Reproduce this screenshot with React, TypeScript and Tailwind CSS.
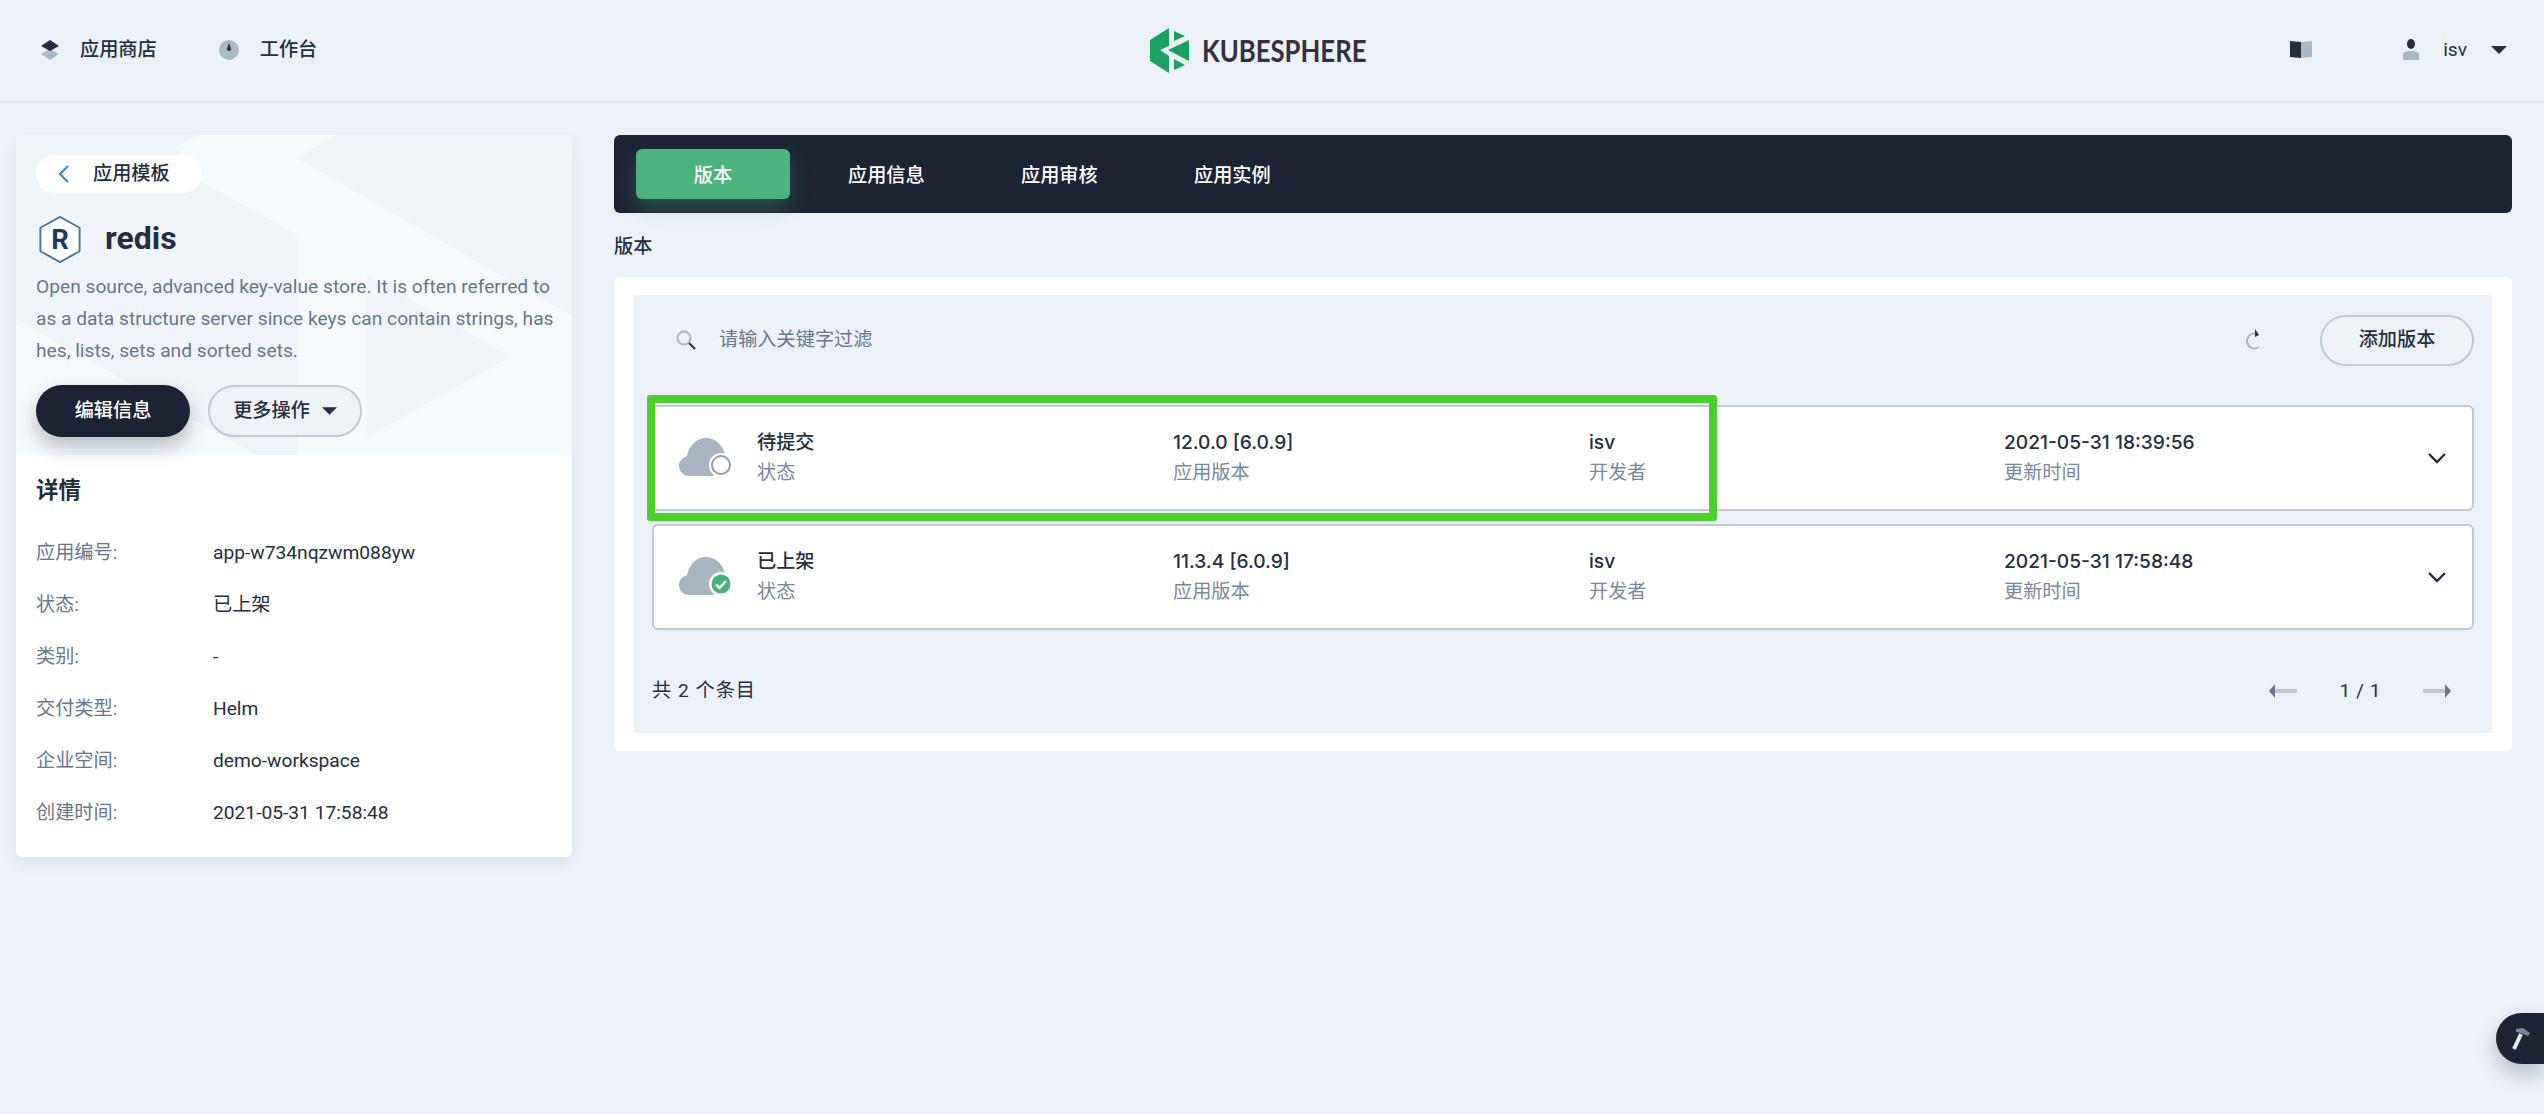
import React from 'react';

const details = [
  ['应用编号:', 'app-w734nqzwm088yw'],
  ['状态:', '已上架'],
  ['类别:', '-'],
  ['交付类型:', 'Helm'],
  ['企业空间:', 'demo-workspace'],
  ['创建时间:', '2021-05-31 17:58:48'],
];

const versions = [
  { status: '待提交', version: '12.0.0 [6.0.9]', author: 'isv', time: '2021-05-31 18:39:56', done: false },
  { status: '已上架', version: '11.3.4 [6.0.9]', author: 'isv', time: '2021-05-31 17:58:48', done: true },
];

function Caret({ className }: { className: string }) {
  return (
    <svg viewBox="0 0 16 8" className={className}>
      <path d="M0 0h16l-8 8z" fill="#242e42" />
    </svg>
  );
}

function Logo() {
  return (
    <svg viewBox="0 0 40 45" className="w-[40px] h-[45px] shrink-0">
      <path d="M0 12 19 0v18l-9 4 9 6v17L0 33z" fill="#1aa05f" />
      <path d="M24 3l11 5-11 5zM39 12v21L18 22zM24 31l11 6-11 5z" fill="#1aa05f" />
    </svg>
  );
}

function CloudIcon({ done }: { done: boolean }) {
  return (
    <svg viewBox="0 0 54 40" className="w-[54px] h-[40px] shrink-0">
      <path
        d="M10 38a10 10 0 0 1-2-19.800C10 7 18 0 27 0c10 0 18 8 19 18v8L34 38z"
        fill="#a7b5c3"
      />
      <circle cx="42" cy="27" r="12" fill="#fff" />
      {done ? (
        <>
          <circle cx="42" cy="27" r="9.500" fill="#45b27a" />
          <path d="M37 27.500l3.500 3.500 6.500-7" fill="none" stroke="#fff" strokeWidth="2.500" />
        </>
      ) : (
        <circle cx="42" cy="27" r="9" fill="#fff" stroke="#8f9dad" strokeWidth="2" />
      )}
    </svg>
  );
}

function Banner() {
  return (
    <svg viewBox="0 0 556 320" preserveAspectRatio="none" className="absolute left-0 top-0 w-[556px] h-[320px]">
      <path
        d="M183 0h138l-40 23 275 158v139H281V100L186 47l-26-35z"
        fill="#f7fafc"
      />
      <path d="M0 184l240 136H0z" fill="#f7fafc" />
      <path d="M351 140l144 82-144 80z" fill="#f0f4f9" />
    </svg>
  );
}

export default function App() {
  return (
    <div className="min-h-screen relative overflow-hidden bg-[#ecf1f8] text-[#242e42] text-[19.200px] font-['Roboto','Noto_Sans_CJK_SC',sans-serif]">
      <header className="h-[103px] border-b-2 border-[#dfe4ec] flex items-center pb-[1px]">
        <div className="w-[1150px] flex items-center pl-[40px]">
          <svg viewBox="0 0 20 20" className="w-[20px] h-[20px] mr-[20px]">
            <path d="M10 9l9 5-9 6-9-6z" fill="#abb8c6" />
            <path d="M10 0l9 6-9 5-9-5z" fill="#242e42" />
          </svg>
          <span className="font-medium">应用商店</span>
          <svg viewBox="0 0 20 20" className="w-[20px] h-[20px] ml-[62px] mr-[21px]">
            <circle cx="10" cy="10" r="10" fill="#abb8c6" />
            <path d="M10 3l2 6a2 2 0 1 1-4 0z" fill="#242e42" />
          </svg>
          <span className="font-medium">工作台</span>
        </div>
        <Logo />
        <span className="ml-[12px] text-[31px] leading-none text-[#352f3f] font-['Lato',sans-serif] font-bold origin-left scale-x-[0.83]">
          KUBESPHERE
        </span>
        <div className="ml-auto flex items-center pr-[37px]">
          <svg viewBox="0 0 22 17" className="w-[22px] h-[17px]">
            <path d="M0 0l11 1v16L0 16z" fill="#242e42" />
            <path d="M11 1l11-1v16l-11 1z" fill="#abb8c6" />
          </svg>
          <svg viewBox="0 0 16 21" className="w-[16px] h-[21px] ml-[91px]">
            <ellipse cx="8" cy="5" rx="4" ry="5" fill="#242e42" />
            <path d="M0 21v-5c0-3 3-4 8-4s8 1 8 4v5z" fill="#abb8c6" />
          </svg>
          <span className="ml-[24px]">isv</span>
          <Caret className="w-[16px] h-[8px] ml-[24px]" />
        </div>
      </header>

      <main className="flex pt-[32px] pl-[16px]">
        <aside className="w-[556px] h-[722px] shrink-0 rounded-[6px] bg-white shadow-[0_6px_16px_rgba(36,46,66,0.07)] overflow-hidden">
          <section className="relative h-[320px] bg-[#f0f4f9] px-[20px] pt-[20px]">
            <Banner />
            <div className="relative">
              <a className="w-[166px] h-[38px] rounded-full bg-white flex items-center pl-[22px] font-medium">
                <svg viewBox="0 0 12 20" className="w-[12px] h-[20px] mr-[23px]">
                  <path d="M10 2l-8 8 8 8" fill="none" stroke="#2b8fc9" strokeWidth="2.200" />
                </svg>
                应用模板
              </a>
              <div className="flex items-center mt-[23px] h-[47px]">
                <svg viewBox="0 0 44 48" className="w-[44px] h-[47px] ml-[2px] shrink-0">
                  <path
                    d="M22 1l20 11v24L22 47 2 36V12z"
                    fill="#fff"
                    stroke="#4d7a9b"
                    strokeWidth="2"
                    strokeLinejoin="round"
                  />
                  <text x="22" y="34" textAnchor="middle" fontSize="28" fontWeight="700" fill="#1d3b5c">
                    R
                  </text>
                </svg>
                <h1 className="ml-[23px] text-[32px] leading-none font-bold relative -top-[2px]">redis</h1>
              </div>
              <p className="mt-[8px] w-[524px] leading-[32px] text-[#67768c] break-all">
                Open source, advanced key-value store. It is often referred to as a data structure server since keys can contain strings, has hes, lists, sets and sorted sets.
              </p>
              <div className="flex mt-[18px] gap-[18px]">
                <button type="button" className="w-[154px] h-[52px] rounded-full bg-[#1c2334] text-white font-medium shadow-[0_10px_20px_rgba(36,46,66,0.3)]">
                  编辑信息
                </button>
                <button type="button" className="w-[154px] h-[52px] rounded-full bg-[#eef2f7] border-2 border-[#c1c9d4] font-medium flex items-center justify-center gap-[12px]">
                  更多操作
                  <Caret className="w-[15px] h-[8px]" />
                </button>
              </div>
            </div>
          </section>
          <section className="px-[20px] pt-[17px]">
            <h2 className="text-[22.400px] leading-[36px] font-semibold mb-[19px]">详情</h2>
            {details.map(([label, value]) => (
              <div key={label} className="flex h-[52px] items-center">
                <span className="w-[177px] shrink-0 text-[#67768c]">{label}</span>
                <span>{value}</span>
              </div>
            ))}
          </section>
        </aside>

        <div className="ml-[42px] w-[1898px] shrink-0">
          <nav className="h-[78px] rounded-[6px] bg-[#1c2334] flex items-center pl-[22px] text-white font-medium">
            <span className="w-[154px] h-[50px] rounded-[6px] bg-[#4bb37b] flex items-center justify-center pt-[4px] shadow-[0_10px_20px_rgba(75,179,123,0.3)]">
              版本
            </span>
            <span className="ml-[58px] w-[173px] pt-[4px]">应用信息</span>
            <span className="w-[173px] pt-[4px]">应用审核</span>
            <span className="pt-[4px]">应用实例</span>
          </nav>
          <h2 className="mt-[20px] leading-[28px] font-medium">版本</h2>
          <section className="mt-[16px] h-[474px] rounded-[6px] bg-white p-[18px_20px]">
            <div className="h-[438px] bg-[#ecf1f8] px-[18px]">
              <div className="flex items-center h-[110px] pl-[24px] pb-[20px]">
                <svg viewBox="0 0 20 20" className="w-[20px] h-[20px] mr-[23px]">
                  <circle cx="8" cy="8" r="6.500" fill="none" stroke="#abb8c6" strokeWidth="2" />
                  <path d="M13 13l6 6" stroke="#242e42" strokeWidth="2" />
                </svg>
                <span className="text-[#67768c]">请输入关键字过滤</span>
                <svg viewBox="0 0 20 22" className="w-[20px] h-[22px] ml-auto mr-[56px]">
                  <path d="M11 4.500A7.500 7.500 0 1 0 15 18" fill="none" stroke="#abb8c6" strokeWidth="2" />
                  <path d="M11 0l4 6-4 2z" fill="#242e42" />
                </svg>
                <button type="button" className="w-[154px] h-[51px] rounded-full border-2 border-[#c1c9d4] bg-[#eef2f7] font-medium">
                  添加版本
                </button>
              </div>
              <div className="relative flex flex-col gap-[13px]">
                {versions.map((v) => (
                  <div key={v.version} className="h-[106px] rounded-[6px] border-2 border-[#c1c9d4] bg-white flex items-center pl-[25px] font-['Inter','Noto_Sans_CJK_SC',sans-serif]">
                    <div className="w-[78px] shrink-0">
                      <CloudIcon done={v.done} />
                    </div>
                    <div className="w-[416px] shrink-0">
                      <p className="leading-[29px] font-medium">{v.status}</p>
                      <p className="leading-[31px] text-[#79879c]">状态</p>
                    </div>
                    <div className="w-[416px] shrink-0">
                      <p className="leading-[29px] font-medium">{v.version}</p>
                      <p className="leading-[31px] text-[#79879c]">应用版本</p>
                    </div>
                    <div className="w-[415px] shrink-0">
                      <p className="leading-[29px] font-medium">{v.author}</p>
                      <p className="leading-[31px] text-[#79879c]">开发者</p>
                    </div>
                    <div className="flex-1">
                      <p className="leading-[29px] font-medium">{v.time}</p>
                      <p className="leading-[31px] text-[#79879c]">更新时间</p>
                    </div>
                    <svg viewBox="0 0 20 12" className="w-[20px] h-[12px] mr-[25px]">
                      <path d="M2 2l8 8 8-8" fill="none" stroke="#242e42" strokeWidth="2.400" />
                    </svg>
                  </div>
                ))}
                <div className="absolute left-[-5px] top-[-10px] w-[1070px] h-[126px] rounded-[3px] border-[8px] border-[#4ccf2d]" />
              </div>
              <div className="flex items-center mt-[36px] h-[50px]">
                <span className="tracking-[1px]">共 2 个条目</span>
                <div className="ml-auto flex items-center pr-[23px]">
                  <svg viewBox="0 0 28 14" className="w-[28px] h-[14px]">
                    <path d="M6 7h22" stroke="#c1c9d4" strokeWidth="4" />
                    <path d="M6 0v14L0 7z" fill="#67768c" />
                  </svg>
                  <span className="mx-[42px] tracking-[0.5px]">1 / 1</span>
                  <svg viewBox="0 0 28 14" className="w-[28px] h-[14px]">
                    <path d="M0 7h22" stroke="#c1c9d4" strokeWidth="4" />
                    <path d="M22 0v14l6-7z" fill="#67768c" />
                  </svg>
                </div>
              </div>
            </div>
          </section>
        </div>
      </main>

      <button type="button" className="absolute right-0 top-[1013px] w-[48px] h-[51px] rounded-l-full bg-[#1c2334] flex items-center justify-center shadow-[0_10px_20px_rgba(36,46,66,0.25)]">
        <svg viewBox="0 0 20 24" className="w-[20px] h-[24px]">
          <path d="M4 22l7-15" stroke="#e9edf2" strokeWidth="4" />
          <path d="M6 2l7-1 7 5-2 3-7-3-5-1z" fill="#79879c" />
        </svg>
      </button>
    </div>
  );
}
